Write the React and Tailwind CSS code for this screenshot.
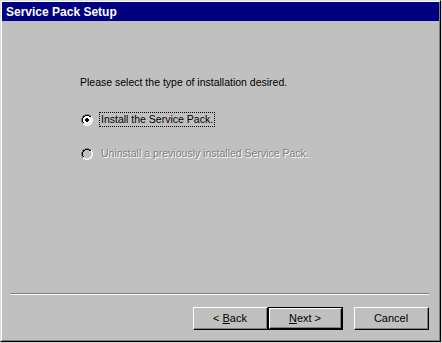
import React from "react";

const Radio = ({ checked, disabled }) => (
  <svg width="12" height="12" viewBox="0 0 12 12" shapeRendering="crispEdges">
    {/* outer dark top-left */}
    <path d="M4 0h4v1H4zM2 1h2v1H2zM8 1h2v1H8zM1 2h1v2H1zM0 4h1v4H0zM1 8h1v2H1z" fill="#808080" />
    {/* outer light bottom-right */}
    <path d="M10 2h1v2h-1zM11 4h1v4h-1zM10 8h1v2h-1zM8 10h2v1H8zM2 10h2v1H2zM4 11h4v1H4z" fill="#ffffff" />
    {/* inner black */}
    <path d="M4 1h4v1H4zM2 2h2v1H2zM8 2h2v1H8zM2 3h1v1H2zM1 4h1v4H1zM2 8h1v1H2z" fill="#000000" />
    {/* inner light */}
    <path d="M9 3h1v1H9zM10 4h1v4h-1zM9 8h1v1H9zM8 9h2v1H8zM2 9h2v1H2zM4 10h4v1H4z" fill="#dfdfdf" />
    {/* face */}
    <path d="M4 2h4v1h1v1h1v4H9v1H8v1H4V9H3V8H2V4h1V3h1z" fill={disabled ? "#c0c0c0" : "#ffffff"} />
    {checked && <path d="M5 4h2v1h1v2H7v1H5V7H4V5h1z" fill="#000000" />}
  </svg>
);

const Btn = ({ children, isDefault }) => (
  <div
    className={
      "w-[75px] h-[23px] shrink-0 " +
      (isDefault ? "border border-black" : "")
    }
  >
    <div className="h-full border-t border-l border-white border-r border-b border-r-black border-b-black">
      <div className="h-full flex items-center justify-center border-r border-b border-[#808080] text-[11px] text-black">
        {children}
      </div>
    </div>
  </div>
);

const App = () => {
  return (
    <div
      className="w-[442px] h-[343px] bg-[#d4d4d4] overflow-hidden"
      style={{ fontFamily: '"Liberation Sans", Arial, sans-serif' }}
    >
      <div className="w-[441px] h-[342px] border-t border-l border-[#dfdfdf] border-r border-b border-r-black border-b-black">
        <div className="h-full flex flex-col bg-[#c0c0c0] border-t border-l border-white border-r border-b border-r-[#808080] border-b-[#808080]">
          <div className="h-[19px] bg-[#000080] flex items-center pl-[4px]">
            <span className="text-white font-bold text-[12px] leading-none">Service Pack Setup</span>
          </div>
          <div className="flex-1 flex flex-col">
            <div className="pl-[78px] pt-[55px] text-[10.5px] leading-[13px] text-black">
              Please select the type of installation desired.
            </div>
            <div className="pl-[79px] pt-[23px] flex items-center gap-[6px]">
              <Radio checked />
              <span className="text-[10.5px] leading-[13px] text-black border border-dotted border-black px-[1px]">
                Install the Service Pack.
              </span>
            </div>
            <div className="pl-[79px] pt-[19px] flex items-center gap-[6px]">
              <Radio disabled />
              <span className="text-[10.5px] leading-[13px] text-[#808080] border border-transparent px-[1px] [text-shadow:1px_1px_0_#ffffff]">
                Uninstall a previously installed Service Pack.
              </span>
            </div>
            <div className="mt-auto ml-[8px] mr-[10px]">
              <div className="h-px bg-[#808080]" />
              <div className="h-px bg-white" />
            </div>
            <div className="flex justify-end pt-[12px] pb-[10px] pr-[10px]">
              <Btn>
                &lt; <span className="underline ml-[3px]">B</span>ack
              </Btn>
              <Btn isDefault>
                <span className="underline">N</span>ext &gt;
              </Btn>
              <div className="ml-[11px]">
                <Btn>Cancel</Btn>
              </div>
            </div>
          </div>
        </div>
      </div>
    </div>
  );
};

export default App;
